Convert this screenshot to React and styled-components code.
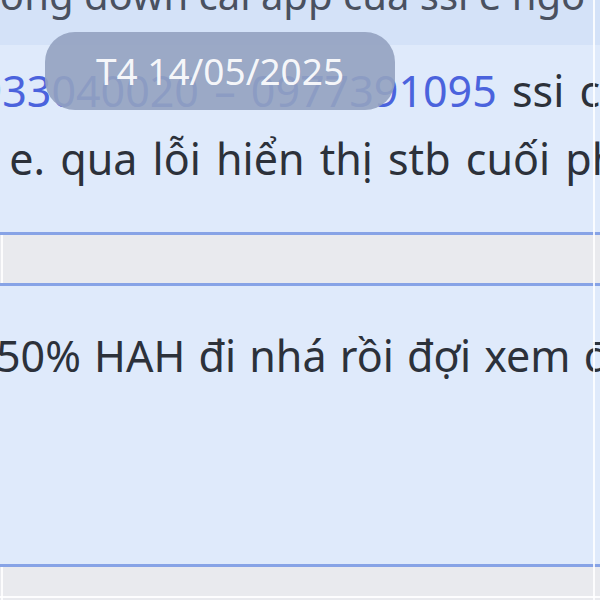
import React from "react";
import styled, { createGlobalStyle } from "styled-components";

const Global = createGlobalStyle`
  html, body { margin: 0; padding: 0; background: #e9eaee; }
  body { font-family: "Noto Sans", "Open Sans", sans-serif; }
`;

const Page = styled.div`
  position: relative;
  width: 600px;
  height: 600px;
  overflow: hidden;
  background: #e9eaee;
  display: flex;
  flex-direction: column;
  &::before, &::after {
    content: "";
    position: absolute;
    top: 0;
    bottom: 0;
    width: 2px;
    background: rgba(255, 255, 255, 0.85);
  }
  &::before { left: 1px; }
  &::after { left: 593px; }
`;

const Bubble = styled.div`
  position: relative;
  flex: none;
  background: #dfeafb;
  border-top: ${(p) => (p.$top ? "3px solid #87a3e6" : "none")};
  border-bottom: 3px solid #87a3e6;
  margin-top: ${(p) => p.$offset || 0}px;
  height: ${(p) => p.$height}px;
  box-sizing: border-box;
  display: flex;
  flex-direction: column;
`;

const Quote = styled.div`
  height: 75px;
  flex: none;
  background: #d4e2f8;
  overflow: hidden;
`;

const Body = styled.div`
  padding-top: ${(p) => p.$pad}px;
  overflow: hidden;
`;

const Line = styled.div`
  font-size: ${(p) => p.$size || 43}px;
  line-height: ${(p) => p.$lh || 68}px;
  word-spacing: ${(p) => p.$ws || 0}px;
  color: ${(p) => (p.$muted ? "#4a5160" : "#2c313a")};
  white-space: pre;
  margin-left: ${(p) => p.$shift}px;
`;

const Link = styled.span`
  color: #4b63dd;
`;

const Gap = styled.div`
  height: 48px;
  flex: none;
`;

const Footer = styled.div`
  margin-top: 29px;
  height: 4px;
  border-top: 2px solid rgba(255, 255, 255, 0.9);
  flex: none;
`;

const DatePill = styled.div`
  position: absolute;
  left: 45px;
  top: 32px;
  width: 350px;
  height: 78px;
  border-radius: 30px;
  background: rgba(148, 162, 192, 0.9);
  color: rgba(255, 255, 255, 0.93);
  font-size: 37px;
  display: flex;
  align-items: center;
  justify-content: center;
  padding-bottom: 2px;
  box-sizing: border-box;
`;

export default function App() {
  return (
    <>
      <Global />
      <Page>
        <Bubble $offset={-30} $height={265}>
          <Quote>
            <Line $size={40} $lh={50} $shift={-52} $muted>
              đương down cái app của ssi e ngó
            </Line>
          </Quote>
          <Body $pad={12}>
            <Line $shift={-47} $ws={4}>
              <Link>0933040020 – 0977391095</Link> ssi cũng được
            </Line>
            <Line $shift={-30} $ws={4}>ạ e. qua lỗi hiển thị stb cuối phiên</Line>
          </Body>
        </Bubble>
        <Gap />
        <Bubble $top $height={284}>
          <Body $pad={36}>
            <Line $shift={-4} $ws={2}>50% HAH đi nhá rồi đợi xem điều chỉnh</Line>
          </Body>
        </Bubble>
        <Footer />
        <DatePill>T4 14/05/2025</DatePill>
      </Page>
    </>
  );
}
